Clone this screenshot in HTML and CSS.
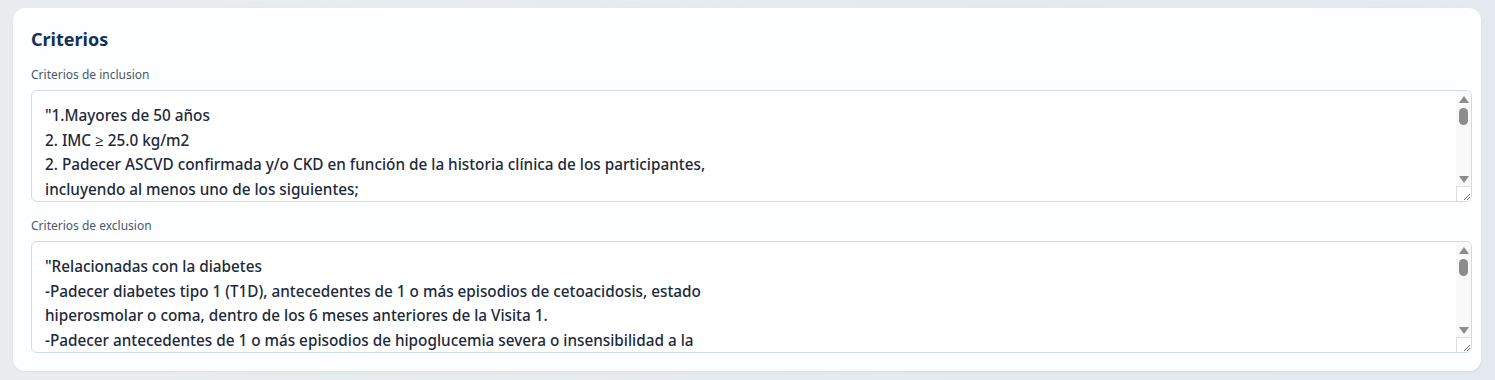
FILE: index.html
```html
<!DOCTYPE html>
<html lang="es">

<head>
  <meta charset="UTF-8" />
  <meta name="viewport" content="width=device-width, initial-scale=1" />
  <title>Criterios</title>
  <link rel="stylesheet" href="styles.css">
</head>

<body>
  <div class="card">
    <h2 class="cardTitle">Criterios</h2>
    <div class="field">
      <label class="fieldLabel" for="inclusion">Criterios de inclusion</label>
      <div class="fieldBox">
        <textarea id="inclusion" class="fieldText" readonly>"1.Mayores de 50 años
2. IMC ≥ 25.0 kg/m2
2. Padecer ASCVD confirmada y/o CKD en función de la historia clínica de los participantes,
incluyendo al menos uno de los siguientes;
a. Infarto de miocardio previo
b. Accidente cerebrovascular isquémico previo
c. Enfermedad arterial periférica sintomática
d. Enfermedad renal crónica con TFGe &lt; 60 mL/min/1.73 m2
3. Capacidad de dar su consentimiento informado"</textarea>
        <div class="scrollBar">
          <div class="scrollUp"></div>
          <div class="scrollThumb"></div>
          <div class="scrollDown"></div>
        </div>
        <div class="scrollCorner">
          <svg width="9" height="9" viewBox="0 0 9 9"><path d="M8 2 L2 8 M8 5 L5 8" stroke="#6b6b6b" stroke-width="1" fill="none" /></svg>
        </div>
      </div>
    </div>
    <div class="field">
      <label class="fieldLabel" for="exclusion">Criterios de exclusion</label>
      <div class="fieldBox">
        <textarea id="exclusion" class="fieldText" readonly>"Relacionadas con la diabetes
-Padecer diabetes tipo 1 (T1D), antecedentes de 1 o más episodios de cetoacidosis, estado
hiperosmolar o coma, dentro de los 6 meses anteriores de la Visita 1.
-Padecer antecedentes de 1 o más episodios de hipoglucemia severa o insensibilidad a la
hipoglucemia dentro de los 6 meses anteriores a la Visita 1.
-Retinopatía diabética proliferativa no tratada.
Relacionadas con el riesgo cardiovascular
-Insuficiencia cardiaca clase IV de la NYHA.
-Infarto de miocardio o accidente cerebrovascular en los 60 días previos."</textarea>
        <div class="scrollBar">
          <div class="scrollUp"></div>
          <div class="scrollThumb"></div>
          <div class="scrollDown"></div>
        </div>
        <div class="scrollCorner">
          <svg width="9" height="9" viewBox="0 0 9 9"><path d="M8 2 L2 8 M8 5 L5 8" stroke="#6b6b6b" stroke-width="1" fill="none" /></svg>
        </div>
      </div>
    </div>
  </div>
</body>

</html>
```

FILE: styles.css
```css
html {
  background: #e6ebef;
}

body {
  margin: 0;
  padding: 8px 14px 10px 13px;
  background: linear-gradient(to right, #e9edf0, #e3e9ee);
  font-family: "Noto Sans", "Open Sans", sans-serif;
  min-height: 100vh;
  box-sizing: border-box;
}

.card {
  background: #fdfeff;
  border-radius: 12px;
  padding: 19px 8px 18px 18px;
  box-shadow: 0 1px 3px rgba(15, 42, 74, 0.06);
}

.cardTitle {
  margin: 0 0 16px 0;
  font-size: 18px;
  line-height: 24px;
  font-weight: 700;
  color: #10325a;
}

.field {
  margin-bottom: 16px;
}

.field:last-child {
  margin-bottom: 0;
}

.fieldLabel {
  display: block;
  font-size: 12px;
  line-height: 16px;
  color: #4b5a6b;
  margin-bottom: 7px;
}

.fieldBox {
  position: relative;
  width: 1441px;
  height: 112px;
}

.fieldText {
  display: block;
  box-sizing: border-box;
  width: 100%;
  height: 100%;
  margin: 0;
  padding: 12px 30px 11px 13px;
  border: 1px solid #cfdbe6;
  border-radius: 6px;
  background: #ffffff;
  font-family: "Noto Sans", "Open Sans", sans-serif;
  font-size: 15.3px;
  font-weight: 500;
  line-height: 24.5px;
  color: #1c2a3a;
  overflow: hidden;
  resize: none;
  outline: none;
}

/* fake native scrollbar drawn over the textarea */
.scrollBar {
  position: absolute;
  top: 1px;
  right: 1px;
  bottom: 16px;
  width: 15px;
  background: #f9f9f9;
  border-top-right-radius: 5px;
  display: flex;
  flex-direction: column;
  align-items: center;
}

.scrollUp {
  margin-top: 5px;
  width: 0;
  height: 0;
  border-left: 5px solid transparent;
  border-right: 5px solid transparent;
  border-bottom: 7px solid #8c8c8c;
}

.scrollThumb {
  margin-top: 5px;
  width: 9px;
  height: 17px;
  border-radius: 5px;
  background: #8c8c8c;
}

.scrollDown {
  margin-top: auto;
  margin-bottom: 3px;
  width: 0;
  height: 0;
  border-left: 5px solid transparent;
  border-right: 5px solid transparent;
  border-top: 7px solid #8c8c8c;
}

.scrollCorner {
  position: absolute;
  right: 1px;
  bottom: 1px;
  width: 14px;
  height: 14px;
  background: #ffffff;
  border-left: 1px solid #dedede;
  border-top: 1px solid #dedede;
  border-bottom-right-radius: 5px;
  display: flex;
  align-items: flex-end;
  justify-content: flex-end;
}
```
